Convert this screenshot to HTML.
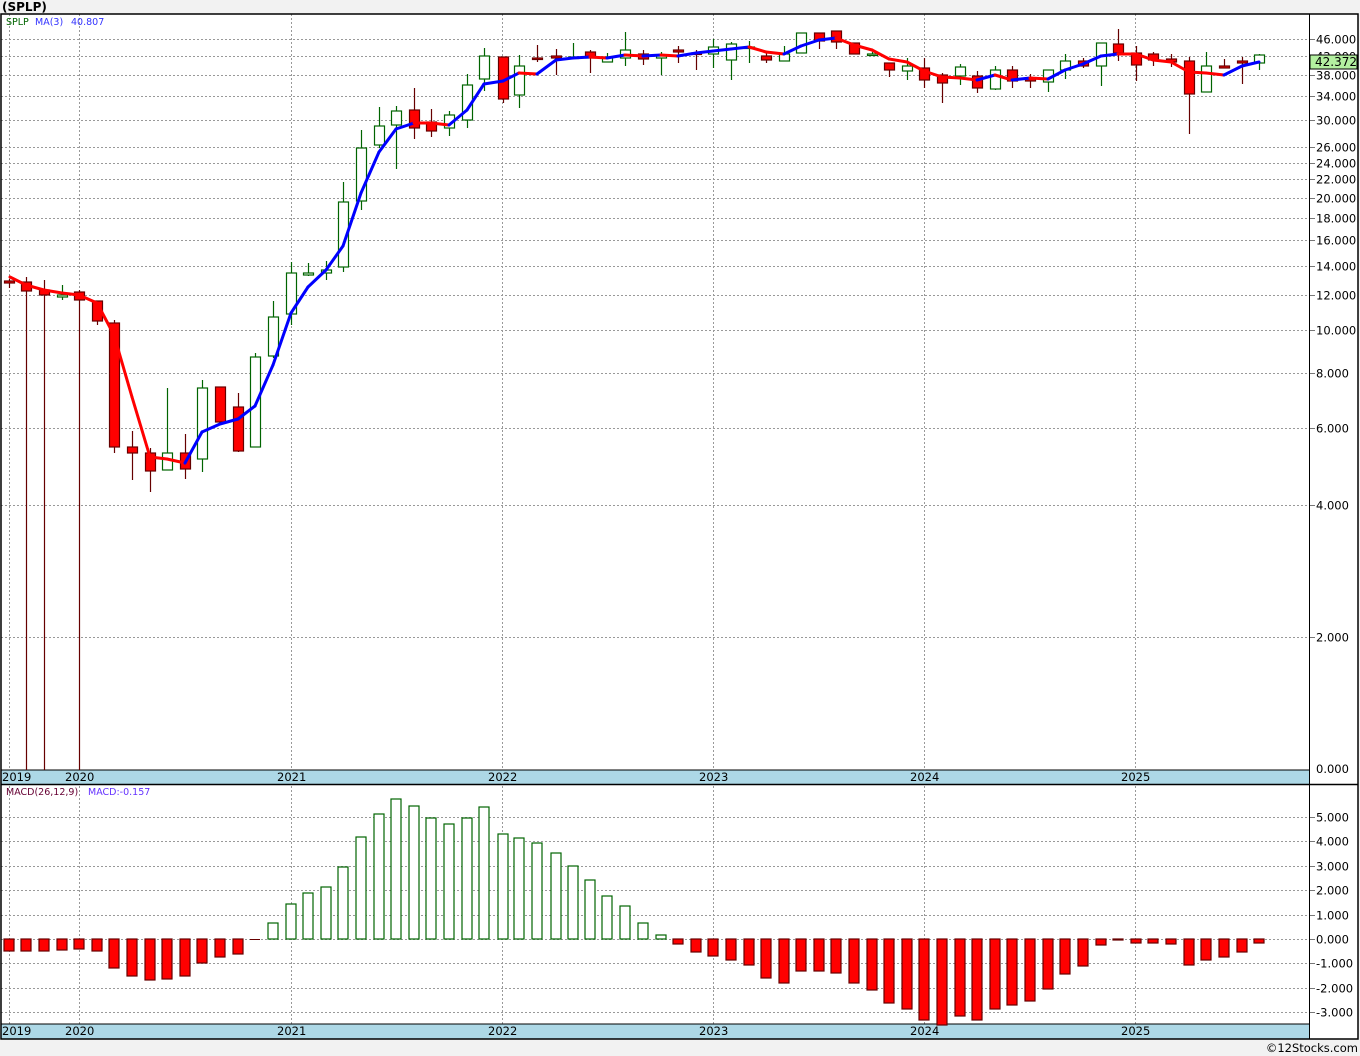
<!DOCTYPE html>
<html><head><meta charset="utf-8"><style>
html,body{margin:0;padding:0;background:#f2f2f2;}
svg{display:block;font-family:"DejaVu Sans","Liberation Sans",sans-serif;}
</style></head><body>
<svg id="c" width="1360" height="1056" viewBox="0 0 1360 1056" xmlns="http://www.w3.org/2000/svg">
<rect x="0" y="0" width="1360" height="1056" fill="#f2f2f2"/>
<text x="2" y="11" font-size="12" font-weight="bold" fill="#000">(SPLP)</text>
<rect x="1" y="14" width="1357" height="1025" fill="#fff"/>
<g id="grid" stroke="#999" stroke-width="1" stroke-dasharray="2,2"></g>
<rect x="1" y="770" width="1308" height="14" fill="#add8e6"/>
<rect x="1" y="1024" width="1308" height="15" fill="#add8e6"/>
<line x1="1" y1="770" x2="1309" y2="770" stroke="#000"/>
<line x1="1" y1="784.5" x2="1358" y2="784.5" stroke="#000" stroke-width="1.5"/>
<line x1="1" y1="1024" x2="1309" y2="1024" stroke="#000"/>
<g font-size="11.5" fill="#000">
<text x="2" y="781">2019</text><text x="65" y="781">2020</text><text x="277" y="781">2021</text><text x="488" y="781">2022</text><text x="699" y="781">2023</text><text x="910" y="781">2024</text><text x="1121" y="781">2025</text>
<text x="2" y="1035">2019</text><text x="65" y="1035">2020</text><text x="277" y="1035">2021</text><text x="488" y="1035">2022</text><text x="699" y="1035">2023</text><text x="910" y="1035">2024</text><text x="1121" y="1035">2025</text>
</g>
<g id="shapes"></g>
<line x1="1309.5" y1="14" x2="1309.5" y2="1039" stroke="#000"/>
<rect x="1" y="14" width="1357" height="1025" fill="none" stroke="#000" stroke-width="1.5"/>
<g id="axis" font-size="11.5" fill="#000"></g>
<rect x="1310" y="55" width="47" height="14" fill="#b3f0a0" stroke="#000"/>
<text x="1315" y="66" font-size="12" fill="#000">42.372</text>
<text x="6" y="25" font-size="9.5" fill="#006400">SPLP</text>
<text x="35" y="25" font-size="9.5" fill="#3333ff">MA(3)</text>
<text x="71" y="25" font-size="9.5" fill="#3333ff">40.807</text>
<text x="6" y="795" font-size="9.5" fill="#660033">MACD(26,12,9)</text>
<text x="88" y="795" font-size="9.5" fill="#6633ff">MACD:-0.157</text>
<text x="1358" y="1052" font-size="11.5" fill="#000" text-anchor="end">©12Stocks.com</text>
</svg>
<script>
var NS="http://www.w3.org/2000/svg";
function el(p,t,a){var e=document.createElementNS(NS,t);for(var k in a)e.setAttribute(k,a[k]);p.appendChild(e);return e;}
var grid=document.getElementById('grid'),sh=document.getElementById('shapes'),ax=document.getElementById('axis');
function py(p){return 330-191*Math.log(p/10);}
var pl=[46,42,38,34,30,26,24,22,20,18,16,14,12,10,8,6,4,2];
pl.forEach(function(p){var y=Math.round(py(p))+.5;el(grid,'line',{x1:1,y1:y,x2:1309,y2:y});el(sh,'line',{x1:1309,y1:y,x2:1315,y2:y,stroke:'#777'});
 var t=el(ax,'text',{x:1316,y:y+4});t.textContent=p.toFixed(3);});
var t0=el(ax,'text',{x:1316,y:773});t0.textContent='0.000';
[-3,-2,-1,0,1,2,3,4,5].forEach(function(v){var y=Math.round(939-24.4*v)+.5;el(grid,'line',{x1:1,y1:y,x2:1309,y2:y});el(sh,'line',{x1:1309,y1:y,x2:1315,y2:y,stroke:'#777'});
 var t=el(ax,'text',{x:1316,y:y+4});t.textContent=(v<0?'-':'')+Math.abs(v).toFixed(3);});
[9,79,291,502,713,924,1135].forEach(function(x){el(grid,'line',{x1:x+.5,y1:14,x2:x+.5,y2:1039});});
var C=[[9,279,281,283,288,'r'],[26,277,282,291,770,'r'],[44,280,290,295,770,'r'],[62,285,295,297,300,'g'],[79,290,292,300,770,'r'],[97,301,301,321,325,'r'],[114,320,323,447,453,'r'],[132,431,447,453,480,'r'],[150,448,453,471,492,'r'],[167,388,453,470,470,'g'],[185,434,453,469,479,'r'],[202,380,388,459,472,'g'],[220,387,387,422,422,'r'],[238,393,407,451,452,'r'],[255,353,357,447,447,'g'],[273,301,317,356,358,'g'],[291,262,273,314,325,'g'],[308,263,273,275,276,'g'],[326,261,270,273,280,'g'],[343,182,202,267,272,'g'],[361,130,148,201,210,'g'],[379,107,126,145,148,'g'],[396,106,111,125,169,'g'],[414,88,110,128,139,'r'],[431,109,122,131,137,'r'],[449,111,115,128,136,'g'],[467,74,85,120,128,'g'],[484,48,56,79,91,'g'],[503,57,57,99,103,'r'],[519,55,66,95,108,'g'],[537,45,58,59,62,'r'],[556,49,56,58,75,'r'],[573,43,57,58,58,'g'],[590,50,52,58,73,'r'],[607,53,57,62,62,'g'],[625,32,50,58,66,'g'],[643,50,54,59,65,'r'],[661,52,56,58,75,'g'],[678,46,50,52,63,'r'],[696,50,53,54,70,'r'],[713,39,47,54,68,'g'],[731,42,44,60,80,'g'],[749,41,47,48,63,'g'],[766,53,56,60,63,'r'],[784,46,54,61,61,'g'],[801,33,33,53,53,'g'],[819,33,33,41,49,'r'],[836,31,31,42,49,'r'],[854,43,43,54,54,'r'],[872,52,54,55,56,'g'],[889,63,63,70,77,'r'],[907,58,66,71,80,'g'],[924,58,68,80,88,'r'],[942,73,75,83,103,'r'],[960,64,67,76,85,'g'],[977,71,76,88,93,'r'],[995,66,70,89,90,'g'],[1012,66,70,81,88,'r'],[1030,74,78,81,88,'r'],[1048,70,70,82,92,'g'],[1065,54,61,70,79,'g'],[1083,58,61,66,68,'r'],[1101,43,43,66,86,'g'],[1118,29,44,53,61,'r'],[1136,46,53,65,81,'r'],[1153,52,54,60,66,'r'],[1171,54,59,62,67,'r'],[1189,57,61,94,134,'r'],[1206,52,66,92,92,'g'],[1224,59,66,68,67,'r'],[1242,57,61,63,84,'r'],[1259,54,55,63,70,'g']];
C.forEach(function(c){var x=c[0],g=c[5]=='g',col=g?'#006400':'#660000';
 el(sh,'line',{x1:x+.5,y1:c[1],x2:x+.5,y2:c[4],stroke:col,'stroke-width':1.2});
 var h=Math.max(c[3]-c[2],1.5);
 el(sh,'rect',{x:x-4.5,y:c[2],width:10,height:h,fill:g?'#fff':'#ff0000',stroke:col,'stroke-width':1.2});});
var M=[[10,277],[26,285],[44,290],[62,293],[79,295],[97,303],[114,335],[132,397],[150,457],[167,459],[185,463],[202,432],[220,424],[238,419],[255,406],[273,365],[291,313],[308,287],[326,270],[343,246],[361,193],[379,152],[396,129],[414,123],[431,123],[449,125],[467,110],[484,84],[503,81],[519,73],[537,74],[556,60],[573,58],[590,57],[607,58],[625,55],[643,56],[661,55],[678,56],[696,53],[713,51],[731,49],[749,47],[766,52],[784,54],[801,46],[819,40],[836,38],[854,45],[872,50],[889,59],[907,62],[924,71],[942,77],[960,78],[977,80],[995,75],[1012,80],[1030,78],[1048,79],[1065,70],[1083,64],[1101,56],[1118,54],[1136,54],[1153,60],[1171,62],[1189,72],[1206,73],[1224,75],[1242,66],[1259,62]];
for(var i=1;i<M.length;i++){var a=M[i-1],b=M[i];el(sh,'line',{x1:a[0],y1:a[1],x2:b[0],y2:b[1],stroke:b[1]<a[1]?'#0000ff':'#ff0000','stroke-width':3,'stroke-linecap':'round'});}
var B=[951,951,951,950,949,951,968,976,980,979,976,963,957,954,940,923,904,893,887,867,837,814,799,806,818,824,818,807,834,838,843,853,866,880,896,906,923,935,944,952,956,960,965,978,983,971,971,973,983,990,1003,1009,1020,1025,1016,1020,1009,1005,1001,989,974,966,945,940,943,943,944,965,960,957,952,943];
B.forEach(function(v,i){var x=C[i][0];var pos=v<939;
 if(i==14){el(sh,'line',{x1:x-5,y1:939.5,x2:x+5,y2:939.5,stroke:'#660000'});return;}
 var y=pos?v:939,h=Math.abs(v-939);
 el(sh,'rect',{x:x-5,y:y,width:10,height:Math.max(h,1),fill:pos?'#fff':'#ff0000',stroke:pos?'#006400':'#660000','stroke-width':1.2});});
</script>
</body></html>
